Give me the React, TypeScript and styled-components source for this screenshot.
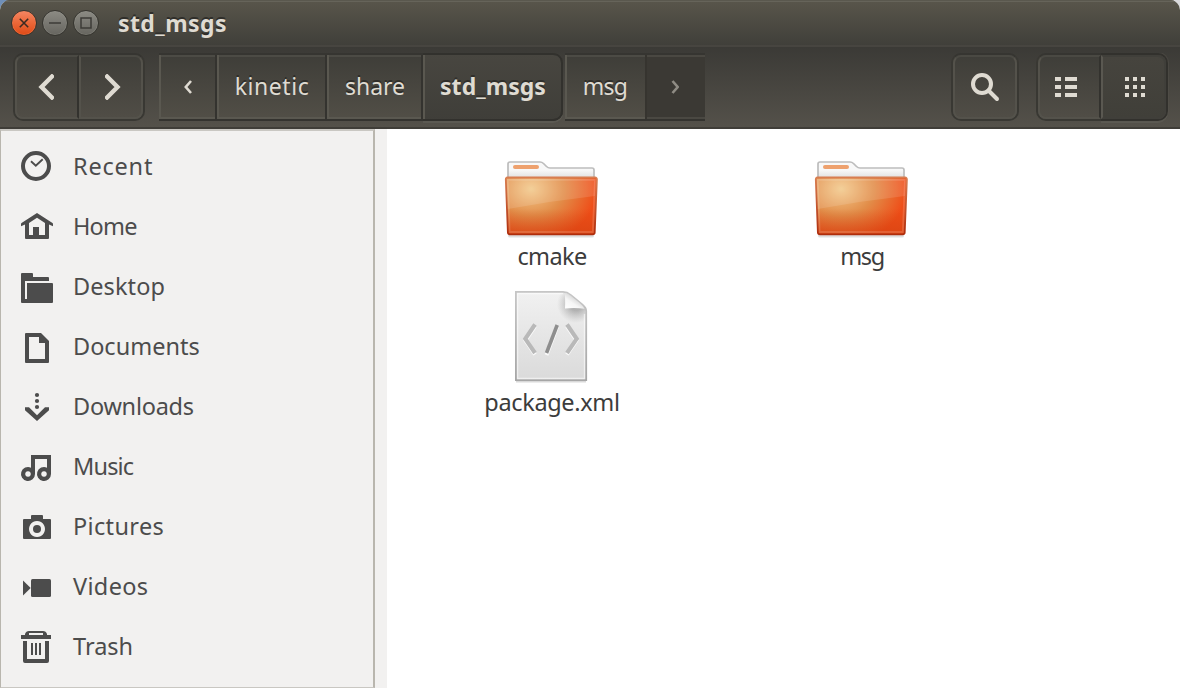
import React, { ReactNode } from "react";
import styled, { createGlobalStyle, css } from "styled-components";

const GlobalStyle = createGlobalStyle`
  * { box-sizing: border-box; }
  html, body, #root { height: 100%; margin: 0; }
  body {
    overflow: hidden;
    background: linear-gradient(90deg, #6f8fb8 0 50%, #d9d9dc 50%);
    font-family: "Noto Sans", sans-serif;
  }
`;

const Window = styled.div`
  display: flex;
  flex-direction: column;
  width: 1180px;
  height: 688px;
  overflow: hidden;
  border-radius: 10px 10px 0 0;
  background: #fff;
`;

const TitleBar = styled.header`
  display: flex;
  align-items: center;
  flex: none;
  height: 47px;
  padding: 0 0 2px 11.4px;
  background: linear-gradient(#59564b, #403f3a 45px, #474540 45px);
  box-shadow: inset 0 1px #5a584e, inset 0 2px #66645a;
`;

const WindowButtons = styled.div`
  display: flex;
  gap: 5px;
`;

const WindowButton = styled.button<{ $close?: boolean }>`
  display: grid;
  place-items: center;
  width: 26px;
  height: 26px;
  padding: 0;
  border: 1.5px solid #35342f;
  border-radius: 50%;
  background: ${(p) => (p.$close ? "linear-gradient(#f48664, #ec6a3c 45%, #df4a16)" : "linear-gradient(#8c8b84, #66655f)")};
  box-shadow: inset 0 0 0 1px ${(p) => (p.$close ? "#f2825366" : "#96958e55")};
`;

const Title = styled.h1`
  margin: 0 0 0 18.600px;
  color: #dfdbd2;
  font-size: 23px;
  line-height: 32px;
  font-weight: 700;
  letter-spacing: 0.42px;
  text-shadow: 0 -2px #2f2e2a;
`;

const Toolbar = styled.nav`
  display: flex;
  flex: none;
  height: 82px;
  padding: 6px 12px 0 13px;
  border-bottom: 2px solid #3f3d38;
  background: linear-gradient(#3b3a36, #54514a);
`;

const Group = styled.div`
  display: flex;
  height: 68px;
  border: 2px solid #393833;
  border-top-color: #363531;
  border-radius: 10px;
`;

const RightTools = styled.div`
  display: flex;
  gap: 17px;
  margin-left: auto;
`;

const ToolButton = styled.button<{ $width: number; $place?: "left" | "right"; $pressed?: boolean; $nudge?: number }>`
  display: flex;
  align-items: center;
  justify-content: center;
  width: ${(p) => p.$width}px;
  padding: 0 ${(p) => Math.max(0, -(p.$nudge ?? 0)) * 2}px 0 ${(p) => Math.max(0, p.$nudge ?? 0) * 2}px;
  border: 2px solid #54524b;
  border-top-color: #4a4943;
  border-radius: 8px;
  background: linear-gradient(#3f3e39, #504d46);
  ${(p) => p.$place === "left" && css`
    border-right-color: #33322e;
    border-radius: 8px 0 0 8px;
  `}
  ${(p) => p.$place === "right" && css`
    border-radius: 0 8px 8px 0;
  `}
  ${(p) => p.$pressed && css`
    border-color: #403f3a #403f3a #403f3a #5a5851;
    background: linear-gradient(#46443e, #403f39);
    box-shadow: 0 4px 0 -2px #32312d, 2px 2px 0 2px #5b595280;
    clip-path: inset(-2px -4px -4px 0);
    box-shadow: 0 0 0 2px #32312d, 0 0 0 3px #57554e66, 0 2px 0 2px #5b5952;
  `}
`;

const PathBar = styled.div`
  display: flex;
  height: 68px;
  margin-left: 14px;
`;

const Crumb = styled.button<{ $width: number; $spacing?: number; $kind?: "current" | "child" | "end" }>`
  display: flex;
  align-items: center;
  justify-content: center;
  width: ${(p) => p.$width}px;
  padding: 0 0 2px;
  border: 0;
  background: linear-gradient(#3e3d38, #524f47);
  box-shadow: inset 0 2px #363531, inset 0 -2px #34332f, inset 2px 0 #5a5850, inset -2px 0 #34332f,
    inset 0 4px #4c4b45, inset 0 -4px #5a5850;
  color: #dfdbd2;
  font: 23px/32px "Noto Sans", sans-serif;
  letter-spacing: ${(p) => p.$spacing ?? 0}px;
  text-shadow: 0 -2px #2f2e2a;
  svg { position: relative; top: 1px; }
  ${(p) => p.$kind === "current" && css`
    margin-right: 2px;
    border-radius: 0 10px 10px 0;
    background: linear-gradient(#484640, #3f3e39);
    box-shadow: inset 0 2px #32312d, inset 0 -2px #32312d, inset 2px 0 #5a5850, inset -2px 0 #32312d, 0 2px #5b5952;
    font-weight: 700;
  `}
  ${(p) => p.$kind === "child" && css`
    box-shadow: inset 0 2px #363531, inset 0 -2px #34332f, inset 2px 0 #5a5850,
      inset 0 4px #4c4b45, inset 0 -4px #5a5850;
  `}
  ${(p) => p.$kind === "end" && css`
    background: #3b3934;
    box-shadow: inset 0 2px #363531, inset 0 -2px #34332f, inset 2px 0 #36342f,
      inset 0 4px #4a4842, inset 0 -4px #4a4842;
  `}
`;

const Body = styled.div`
  display: flex;
  flex: 1;
  min-height: 0;
  background: #f2f1f0;
`;

const Sidebar = styled.aside`
  width: 375px;
  padding-top: 5px;
  border: solid #b9b6ae;
  border-width: 2px 2px 1px 1px;
  border-top-color: #c9c7c2;
  border-bottom-color: #c9c7c2;
`;

const Place = styled.div<{ $spacing: number }>`
  display: flex;
  align-items: center;
  gap: 20px;
  height: 60px;
  padding-left: 20px;
  color: #4c4c4c;
  font-size: 23.5px;
  line-height: 32px;
  letter-spacing: ${(p) => p.$spacing}px;
`;

const PlaceIcon = styled.svg`
  display: block;
  width: 32px;
  height: 32px;
  overflow: visible;
  fill: #4c4c4c;
`;

const Files = styled.main`
  display: grid;
  grid-template-columns: 310px 310px;
  grid-auto-rows: 146px;
  align-content: start;
  flex: 1;
  margin-left: 12px;
  padding: 15px 0 0 9px;
  background: #fff;
`;

const File = styled.div`
  display: flex;
  flex-direction: column;
  align-items: center;
`;

const FileName = styled.span<{ $spacing: number }>`
  padding-left: 2px;
  color: #3c3c3c;
  font-size: 23.5px;
  line-height: 28px;
  letter-spacing: ${(p) => p.$spacing}px;
`;

const FileIcon = styled.svg`
  display: block;
  width: 96px;
  height: 98px;
`;

const Stroke = styled.path<{ $w: number; $color?: string }>`
  fill: none;
  stroke: ${(p) => p.$color ?? "#dfdbd2"};
  stroke-width: ${(p) => p.$w};
`;

const folderFront = "M4.500 33.500h87.500q2 0 1.900 2L91.700 88.500q-.1 1.800-2.100 1.800H7q-2 0-2.100-1.800L2.800 35.500q-.1-2 1.700-2z";

const Folder = ({ id }: { id: string }) => (
  <FileIcon viewBox="0 0 96 98">
    <defs>
      <radialGradient id={`${id}-front`} gradientUnits="userSpaceOnUse" cx="28" cy="45" r="66" gradientTransform="translate(0 8) scale(1 .82)">
        <stop offset="0" stopColor="#f2c98b" />
        <stop offset=".5" stopColor="#e28d49" />
        <stop offset="1" stopColor="#ef4c17" />
      </radialGradient>
      <linearGradient id={`${id}-shade`} x2="0" y2="1">
        <stop offset=".55" stopColor="#c94813" stopOpacity="0" />
        <stop offset="1" stopColor="#cf4010" stopOpacity=".55" />
      </linearGradient>
      <linearGradient id={`${id}-edge`} x2="0" y2="1">
        <stop offset="0" stopColor="#d87d50" />
        <stop offset="1" stopColor="#ae2d0d" />
      </linearGradient>
      <linearGradient id={`${id}-paper`} x2="0" y2="1">
        <stop offset=".4" stopColor="#f8f8f8" />
        <stop offset="1" stopColor="#d4d4d4" />
      </linearGradient>
    </defs>
    <path d="M5 90h86v2q0 1.500-2 1.500H7q-2 0-2-1.500z" fill="#000" opacity=".13" />
    <path d="M5 37V20q0-2 2-2h30q2 0 3.500 1.500l3 3q1.500 1.500 3.500 1.500H89q2 0 2 2v12z" fill={`url(#${id}-paper)`} stroke="#bdbdbd" strokeWidth="1.700" />
    <rect x="10" y="21" width="26" height="4" rx="2" fill="#eea16e" />
    <path d={folderFront} fill={`url(#${id}-front)`} />
    <path d={folderFront} fill={`url(#${id}-shade)`} stroke={`url(#${id}-edge)`} strokeWidth="1.800" />
    <path d="M3.800 35h88.700l-.6 17Q48 57 4.800 65z" fill="#fff" opacity=".12" />
    <path d="M6.600 88L4.800 35.800h87.200L89.800 88z" fill="none" stroke="#fff" strokeOpacity=".14" strokeWidth="1.800" />
  </FileIcon>
);

const XmlFile = () => (
  <FileIcon viewBox="0 0 96 98">
    <defs>
      <linearGradient id="xml-page" x2="0" y2="1">
        <stop offset="0" stopColor="#f1f1f1" />
        <stop offset="1" stopColor="#dadada" />
      </linearGradient>
      <linearGradient id="xml-edge" x2="0" y2="1">
        <stop offset="0" stopColor="#c6c6c6" />
        <stop offset="1" stopColor="#a6a6a6" />
      </linearGradient>
      <linearGradient id="xml-fold" x1="0" y1="1" x2=".7" y2=".2">
        <stop offset="0" stopColor="#fff" />
        <stop offset=".5" stopColor="#f6f6f6" />
        <stop offset="1" stopColor="#c8c8c8" />
      </linearGradient>
      <radialGradient id="xml-shadow" gradientUnits="userSpaceOnUse" cx="73" cy="14" r="19">
        <stop offset=".35" stopColor="#777" stopOpacity=".5" />
        <stop offset="1" stopColor="#999" stopOpacity="0" />
      </radialGradient>
    </defs>
    <path d="M13 91h70v1.500H13z" fill="#000" opacity=".15" />
    <path d="M12.900 1.900H60q4 0 8 3.200l11.500 9.700q3.600 3 3.700 6.200V90.100H12.900z" fill="url(#xml-page)" />
    <path d="M52 2.500h9q3 1 7 3.500l11 9q3.500 3 3.500 6v13H52z" fill="url(#xml-shadow)" />
    <path d="M12.900 1.900H60q4 0 8 3.200l11.500 9.700q3.600 3 3.700 6.200V90.100H12.900z" fill="none" stroke="url(#xml-edge)" strokeWidth="1.800" />
    <path d="M60 3.600H14.600V88.500H81.500V24" fill="none" stroke="#fff" strokeOpacity=".55" strokeWidth="1.300" />
    <path d="M61.500 3q1 5 .5 15.500 10-1 19.500.2-1.500-3-5-6L68 6Q64.500 3.200 61.500 3z" fill="url(#xml-fold)" />
    <Stroke $w={3.900} $color="#fafafa" d="M32 36.500L22.500 50.500 32 64.500M64 36.500l9.500 14L64 64.500M54 37L43.500 65" />
    <Stroke $w={4.100} $color="#b9b9b9" d="M32 34.500L22.300 48.800 32 63M64 34.500l9.700 14.300L64 63" />
    <Stroke $w={3.600} $color="#8e8e8e" d="M54.200 35L43.500 63" />
  </FileIcon>
);

const places: { name: string; spacing: number; icon: ReactNode }[] = [
  {
    name: "Recent", spacing: 0.8,
    icon: <><circle cx="15" cy="16" r="13" fill="none" stroke="#4c4c4c" strokeWidth="4" /><Stroke $w={1.900} $color="#4c4c4c" d="M10 11.300l4.800 4.500 6.900-6.600" /></>,
  },
  {
    name: "Home", spacing: -0.8,
    icon: <path fillRule="evenodd" d="M16 3l15.500 10q.5.500.5 1v2.200L28 14.500V28q0 1-1 1H5q-1 0-1-1V14.500L0 16.200V14q0-.5.500-1zM16 7.800L8 13v12h4v-8h6v8h6V13z" />,
  },
  {
    name: "Desktop", spacing: 0.1,
    icon: <path d="M1 3h10q1 0 1 1v3h15q1 0 1 1v3H4v18h2V13h25q1 0 1 1v18q0 1-1 1H1q-1 0-1-1V4q0-1 1-1z" />,
  },
  {
    name: "Documents", spacing: 0,
    icon: <path fillRule="evenodd" d="M5 3h15l8 8v21q0 1-1 1H5q-1 0-1-1V4q0-1 1-1zm3 4v22h16V13h-6V7z" />,
  },
  {
    name: "Downloads", spacing: -0.25,
    icon: <><circle cx="16" cy="5" r="2.100" /><circle cx="16" cy="11" r="2.100" /><circle cx="16" cy="17" r="2.100" /><path d="M4 17.200h4l8 8 8-8h4v3L16 31 4 20.200z" /></>,
  },
  {
    name: "Music", spacing: -0.85,
    icon: <path fillRule="evenodd" d="M10 5h20v19a7 7 0 1 1-4-6.300V9H14v15a7 7 0 1 1-4-6.300zM7 21.200a2.800 2.800 0 1 0 .01 0zM23 21.200a2.800 2.800 0 1 0 .01 0z" />,
  },
  {
    name: "Pictures", spacing: 0.35,
    icon: <><path fillRule="evenodd" d="M11 5h10q1 0 1 1v3h7q1 0 1 1v18q0 1-1 1H3q-1 0-1-1V10q0-1 1-1h7V6q0-1 1-1zm5 6a8 8 0 1 0 .01 0z" /><circle cx="16" cy="19" r="4" /></>,
  },
  {
    name: "Videos", spacing: 0.35,
    icon: <><rect x="10" y="9" width="20" height="18" rx="1.500" /><path d="M2 10.500L9.700 18 2 25.500z" /></>,
  },
  {
    name: "Trash", spacing: 0,
    icon: <path fillRule="evenodd" d="M0 5h4V4q1-3 4-3h14q3 0 4 3v1h4v4H0zM8 3v2h14V3zM2 11h4v18h18V11h4v20q0 2-2 2H4q-2 0-2-2zM10 13h2v12h-2zM14 13h2v12h-2zM18 13h2v12h-2z" />,
  },
];

export default function App() {
  return (
    <>
      <GlobalStyle />
      <Window>
        <TitleBar>
          <WindowButtons>
            <WindowButton $close aria-label="Close">
              <svg width="10" height="10"><Stroke $w={1.600} $color="#3c2a22" d="M.8.8l8.400 8.400M9.200.8L.8 9.200" /></svg>
            </WindowButton>
            <WindowButton aria-label="Minimize">
              <svg width="12" height="12"><Stroke $w={1.500} $color="#3c3b37" d="M0 6h12" /></svg>
            </WindowButton>
            <WindowButton aria-label="Maximize">
              <svg width="12" height="12"><Stroke $w={1.500} $color="#3c3b37" d="M1 1h10v10H1z" /></svg>
            </WindowButton>
          </WindowButtons>
          <Title>std_msgs</Title>
        </TitleBar>
        <Toolbar>
          <Group>
            <ToolButton $width={64} $place="left" $nudge={-1.5} aria-label="Back">
              <svg width="16" height="26"><Stroke $w={4.400} d="M15.500 1L3.500 13l12 12" /></svg>
            </ToolButton>
            <ToolButton $width={64} $place="right" $nudge={1.5} aria-label="Forward">
              <svg width="16" height="26"><Stroke $w={4.400} d="M.5 1l12 12-12 12" /></svg>
            </ToolButton>
          </Group>
          <PathBar>
            <Crumb $width={58} aria-label="Scroll left">
              <svg width="8" height="14"><Stroke $w={2.600} d="M7 1L1.800 7 7 13" /></svg>
            </Crumb>
            <Crumb $width={110} $spacing={0.55}>kinetic</Crumb>
            <Crumb $width={96}>share</Crumb>
            <Crumb $width={140} $kind="current" $spacing={0.05}>std_msgs</Crumb>
            <Crumb $width={80} $kind="child" $spacing={-0.7}>msg</Crumb>
            <Crumb $width={60} $kind="end" aria-label="Scroll right">
              <svg width="8" height="14"><Stroke $w={2.600} $color="#8f8c84" d="M1.500 1l5.200 6-5.200 6" /></svg>
            </Crumb>
          </PathBar>
          <RightTools>
            <Group>
              <ToolButton $width={64} aria-label="Search">
                <svg width="30" height="30">
                  <circle cx="12" cy="12" r="9" fill="none" stroke="#dfdbd2" strokeWidth="4" />
                  <Stroke $w={4} strokeLinecap="round" d="M18.500 18.500L27 27" />
                </svg>
              </ToolButton>
            </Group>
            <Group>
              <ToolButton $width={63} $place="left" $nudge={-3.5} aria-label="List view">
                <svg width="22" height="20" fill="#dfdbd2">
                  {[0, 8, 16].map((y) => <g key={y}><rect y={y} width="6" height="4" /><rect x="10" y={y} width="12" height="4" /></g>)}
                </svg>
              </ToolButton>
              <ToolButton $width={65} $place="right" $pressed $nudge={1.5} aria-label="Grid view">
                <svg width="20" height="20" fill="#dfdbd2">
                  {[0, 8, 16].map((y) => [0, 8, 16].map((x) => <rect key={`${x}-${y}`} x={x} y={y} width="4" height="4" />))}
                </svg>
              </ToolButton>
            </Group>
          </RightTools>
        </Toolbar>
        <Body>
          <Sidebar>
            {places.map((p) => (
              <Place key={p.name} $spacing={p.spacing}>
                <PlaceIcon viewBox="0 0 32 32">{p.icon}</PlaceIcon>
                {p.name}
              </Place>
            ))}
          </Sidebar>
          <Files>
            <File><Folder id="cmake" /><FileName $spacing={-0.6}>cmake</FileName></File>
            <File><Folder id="msg" /><FileName $spacing={-1.4}>msg</FileName></File>
            <File><XmlFile /><FileName $spacing={-0.35}>package.xml</FileName></File>
          </Files>
        </Body>
      </Window>
    </>
  );
}
